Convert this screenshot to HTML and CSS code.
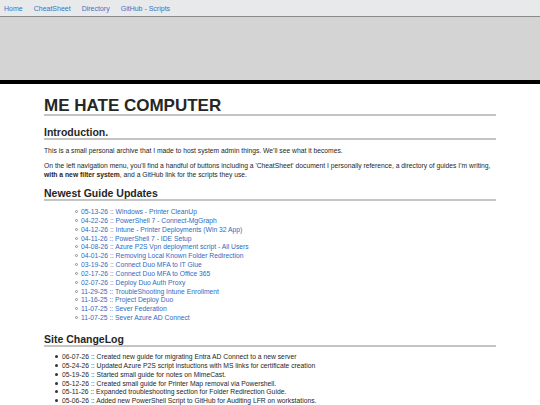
FILE: index.html
```html
<!DOCTYPE html>
<html lang="en">
<head>
    <meta charset="UTF-8">
    <meta name="viewport" content="width=device-width, initial-scale=1.0">
    <title>ME HATE COMPUTER</title>
    <link rel="stylesheet" href="styles.css">
</head>
<body>
    <nav class="topnav">
        <a href="#">Home</a>
        <a href="#">CheatSheet</a>
        <a href="#">Directory</a>
        <a href="#">GitHub - Scripts</a>
    </nav>
    <div class="banner"></div>

    <div class="content">
        <h1>ME HATE COMPUTER</h1>

        <h2 class="intro-title">Introduction.</h2>
        <p>This is a small personal archive that I made to host system admin things. We'll see what it becomes.</p>
        <p>On the left navigation menu, you'll find a handful of buttons including a 'CheatSheet' document I personally reference, a directory of guides I'm writing, <b>with a new filter system</b>, and a GitHub link for the scripts they use.</p>

        <h2 class="updates-title">Newest Guide Updates</h2>
        <ul class="updates">
            <li><a href="#">05-13-26 :: Windows - Printer CleanUp</a></li>
            <li><a href="#">04-22-26 :: PowerShell 7 - Connect-MgGraph</a></li>
            <li><a href="#">04-12-26 :: Intune - Printer Deployments (Win 32 App)</a></li>
            <li><a href="#">04-11-26 :: PowerShell 7 - IDE Setup</a></li>
            <li><a href="#">04-08-26 :: Azure P2S Vpn deployment script - All Users</a></li>
            <li><a href="#">04-01-26 :: Removing Local Known Folder Redirection</a></li>
            <li><a href="#">03-19-26 :: Connect Duo MFA to IT Glue</a></li>
            <li><a href="#">02-17-26 :: Connect Duo MFA to Office 365</a></li>
            <li><a href="#">02-07-26 :: Deploy Duo Auth Proxy</a></li>
            <li><a href="#">11-29-25 :: TroubleShooting Intune Enrollment</a></li>
            <li><a href="#">11-16-25 :: Project Deploy Duo</a></li>
            <li><a href="#">11-07-25 :: Sever Federation</a></li>
            <li><a href="#">11-07-25 :: Sever Azure AD Connect</a></li>
        </ul>

        <h2 class="log-title">Site ChangeLog</h2>
        <ul class="changelog">
            <li>06-07-26 :: Created new guide for migrating Entra AD Connect to a new server</li>
            <li>05-24-26 :: Updated Azure P2S script instuctions with MS links for certificate creation</li>
            <li>05-19-26 :: Started small guide for notes on MimeCast.</li>
            <li>05-12-26 :: Created small guide for Printer Map removal via Powershell.</li>
            <li>05-11-26 :: Expanded troubleshooting section for Folder Redirection Guide.</li>
            <li>05-06-26 :: Added new PowerShell Script to GitHub for Auditing LFR on workstations.</li>
        </ul>
    </div>
</body>
</html>
```

FILE: styles.css
```css
body {
    margin: 0;
    font-family: "Liberation Sans", Arial, sans-serif;
    font-size: 6.75px;
    color: #262626;
    background: #fff;
}
a {
    color: #2f6bbf;
    text-decoration: none;
}

/* top bar + grey banner */
.topnav {
    display: flex;
    gap: 11px;
    height: 16px;
    align-items: center;
    padding: 0 4px;
    font-size: 7px;
    background-color: #e8e9eb;
    border-bottom: 1px solid #8a8a8a;
}
.topnav a {
    color: #3b72c2;
}
.banner {
    height: 63px;
    background-color: #d4d4d4;
    border-bottom: 4px solid #000;
}

.content {
    width: 452px;
    margin: 0 auto;
}
h1 {
    font-size: 17px;
    margin: 13px 0 0;
    line-height: 17px;
    border-bottom: 2px solid #c4c4c4;
}
h2 {
    font-size: 10.5px;
    margin: 10px 0 0;
    line-height: 12px;
    border-bottom: 2px solid #c4c4c4;
}
.updates-title {
    margin-top: 8px;
}
p {
    margin: 6px 0 0;
    line-height: 9px;
}

/* lists */
ul {
    list-style: none;
    margin: 0;
    line-height: 8.85px;
}
ul li::before {
    content: "";
    display: inline-block;
    width: 3px;
    height: 3px;
    border-radius: 50%;
    vertical-align: 1px;
    box-sizing: border-box;
}
.updates {
    margin-top: 7px;
    padding-left: 31px;
}
.updates li::before {
    border: 1px solid #8c8c8c;
    margin-right: 3px;
}
.changelog {
    margin-top: 6px;
    padding-left: 11px;
}
.changelog li::before {
    background: #333;
    margin-right: 4px;
}
```
